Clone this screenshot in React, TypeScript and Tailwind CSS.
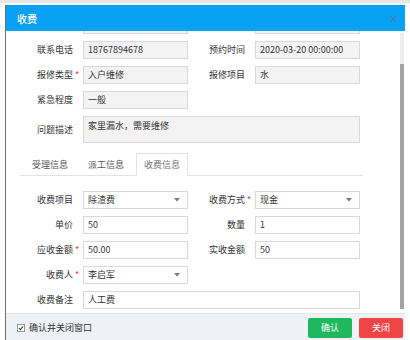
import React from "react";

type Cell = {
  label: string;
  value?: string;
  req?: boolean;
  kind?: "ro" | "input" | "select";
};

const font = { fontFamily: '"Noto Sans CJK SC", "Noto Sans", sans-serif' };

function Caret() {
  return (
    <svg width="6" height="4" viewBox="0 0 6 4" className="shrink-0">
      <polygon points="0,0 6,0 3,3.5" fill="#7a7a7a" />
    </svg>
  );
}

function Box({ value, kind = "input", wide }: { value?: string; kind?: Cell["kind"]; wide?: boolean }) {
  return (
    <div
      className={`flex h-[18px] items-center justify-between border border-[#d9d9d9] pl-[4px] pr-[7px] text-[9px] text-[#333] ${
        wide ? "w-[277px]" : "w-[105px]"
      } ${kind === "ro" ? "bg-[#f3f3f3]" : "bg-white"}`}
    >
      <span className="truncate">{value}</span>
      {kind === "select" && <Caret />}
    </div>
  );
}

function Label({ text, req, w }: { text: string; req?: boolean; w: string }) {
  return (
    <div className={`flex items-center justify-end text-[9px] text-[#333] ${w}`}>
      <span>{text}</span>
      <span className="w-[10px] pl-[2px] text-[9px] leading-none text-[#e53935]">{req ? "*" : ""}</span>
    </div>
  );
}

function Row({ left, right }: { left?: Cell; right?: Cell }) {
  return (
    <div className="flex h-[25px] items-center">
      {left && (
        <>
          <Label text={left.label} req={left.req} w="w-[77px]" />
          <Box value={left.value} kind={left.kind} />
        </>
      )}
      {right && (
        <>
          <Label text={right.label} req={right.req} w="w-[67px]" />
          <Box value={right.value} kind={right.kind} />
        </>
      )}
    </div>
  );
}

function WideRow({ label, value, tall, kind = "input" }: { label: string; value: string; tall?: boolean; kind?: Cell["kind"] }) {
  if (tall) {
    return (
      <div className="flex items-center py-[4px]">
        <Label text={label} w="w-[77px]" />
        <div className="h-[27px] w-[277px] border border-[#d9d9d9] bg-[#f3f3f3] px-[4px] pt-[3px] text-[9px] leading-[12px] text-[#333]">
          {value}
        </div>
      </div>
    );
  }
  return (
    <div className="flex h-[25px] items-center">
      <Label text={label} w="w-[77px]" />
      <Box value={value} kind={kind} wide />
    </div>
  );
}

const tabs = ["受理信息", "派工信息", "收费信息"];

export default function App() {
  return (
    <div className="h-[340px] w-[410px] overflow-hidden bg-white" style={font}>
      <div className="h-[3px] bg-[#e6e6e6]" />
      <div className="pl-[5px] pt-[2px]">
        <div className="w-[400px] border-l border-[#6e6e6e] bg-white">
          {/* header */}
          <div className="flex h-[26px] items-center justify-between bg-[#09a1f4] pl-[11px] pr-[7px]">
            <span className="text-[10px] font-medium text-white">收费</span>
            <span className="text-[11px] leading-none text-[#3f7fb8]">✕</span>
          </div>

          {/* body */}
          <div className="flex h-[282px]">
            <div className="flex-1 overflow-hidden">
              <div className="-mt-[19px]">
                <Row left={{ label: "", kind: "ro" }} right={{ label: "", kind: "ro" }} />
                <Row
                  left={{ label: "联系电话", value: "18767894678", kind: "ro" }}
                  right={{ label: "预约时间", value: "2020-03-20 00:00:00", kind: "ro" }}
                />
                <Row
                  left={{ label: "报修类型", value: "入户维修", kind: "ro", req: true }}
                  right={{ label: "报修项目", value: "水", kind: "ro" }}
                />
                <Row left={{ label: "紧急程度", value: "一般", kind: "ro" }} />
                <WideRow label="问题描述" value="家里漏水，需要维修" tall />

                {/* tabs */}
                <div className="ml-[14px] mt-[6px] flex w-[343px] gap-[4px] border-b border-[#e3e3e3] pl-[4px]">
                  {tabs.map((t, i) => (
                    <div
                      key={t}
                      className={`-mb-px flex h-[23px] w-[52px] items-center justify-center text-[9px] ${
                        i === 2
                          ? "border border-b-white border-[#e3e3e3] bg-white text-[#777]"
                          : "text-[#555]"
                      }`}
                    >
                      {t}
                    </div>
                  ))}
                </div>

                <div className="mt-[11px]">
                  <Row
                    left={{ label: "收费项目", value: "除渣费", kind: "select" }}
                    right={{ label: "收费方式", value: "现金", kind: "select", req: true }}
                  />
                  <Row left={{ label: "单价", value: "50" }} right={{ label: "数量", value: "1" }} />
                  <Row
                    left={{ label: "应收金额", value: "50.00", req: true }}
                    right={{ label: "实收金额", value: "50" }}
                  />
                  <Row left={{ label: "收费人", value: "李启军", kind: "select", req: true }} />
                  <WideRow label="收费备注" value="人工费" />
                </div>
              </div>
            </div>

            {/* scrollbar */}
            <div className="flex w-[5px] flex-col pb-[4px] pr-[1px] pt-[2px]">
              <div className="h-[31px] bg-[#eeeeee]" />
              <div className="flex-1 bg-[#a3a3a3]" />
            </div>
          </div>

          {/* footer */}
          <div className="flex h-[30px] items-start justify-between border-t border-[#e2e6ec] bg-[#eef1f5] pl-[11px] pr-[2px] pt-[4px]">
            <div className="flex h-[20px] items-center gap-[4px]">
              <span className="flex h-[8px] w-[8px] items-center justify-center border border-[#9a9a9a] bg-white">
                <svg width="6" height="6" viewBox="0 0 6 6">
                  <path d="M1 3.2 L2.4 4.6 L5 1.4" fill="none" stroke="#444" strokeWidth="1.1" />
                </svg>
              </span>
              <span className="text-[9px] text-[#333]">确认并关闭窗口</span>
            </div>
            <div className="flex gap-[7px]">
              <button className="h-[20px] w-[44px] rounded-[2px] bg-[#1fb85c] text-[9px] text-white">确认</button>
              <button className="h-[20px] w-[44px] rounded-[2px] bg-[#ef4545] text-[9px] text-white">关闭</button>
            </div>
          </div>
        </div>
      </div>
    </div>
  );
}
